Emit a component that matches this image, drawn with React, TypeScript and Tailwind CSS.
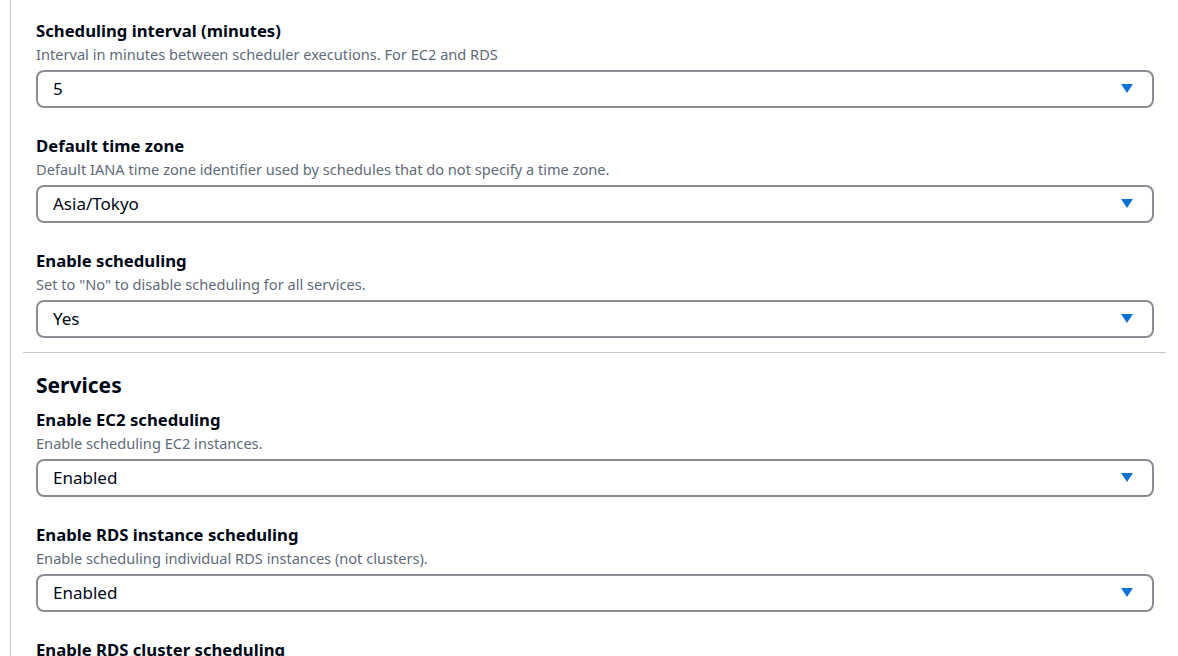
const fields1 = [
  { label: "Scheduling interval (minutes)", desc: "Interval in minutes between scheduler executions. For EC2 and RDS", value: "5" },
  { label: "Default time zone", desc: "Default IANA time zone identifier used by schedules that do not specify a time zone.", value: "Asia/Tokyo" },
  { label: "Enable scheduling", desc: 'Set to "No" to disable scheduling for all services.', value: "Yes" },
]

const fields2 = [
  { label: "Enable EC2 scheduling", desc: "Enable scheduling EC2 instances.", value: "Enabled" },
  { label: "Enable RDS instance scheduling", desc: "Enable scheduling individual RDS instances (not clusters).", value: "Enabled" },
  { label: "Enable RDS cluster scheduling", desc: "Enable scheduling RDS clusters (multi-AZ and Aurora).", value: "Enabled" },
]

function Field({ label, desc, value }: { label: string; desc: string; value: string }) {
  return (
    <div className="flex flex-col">
      <div className="text-[16.7px] leading-[22px] font-bold text-[#000716]">{label}</div>
      <div className="mt-[2px] text-[14.6px] leading-[20px] text-[#5f6b7a]">{desc}</div>
      <div className="mt-[6px] flex h-[38px] items-center justify-between rounded-lg border-2 border-[#8c8c94] bg-white pl-[15px] pr-[19px]">
        <span className="text-[17px] text-[#000716]">{value}</span>
        <svg width="12" height="10" viewBox="0 0 12 10">
          <path d="M0 0 H12 L6 9 Z" fill="#0972d3" />
        </svg>
      </div>
    </div>
  )
}

export default function App() {
  return (
    <div className="h-[656px] overflow-hidden bg-white pl-[10px] font-['Noto_Sans',sans-serif]">
      <div className="h-full w-[1157px] border-l border-[#c6c6cd]">
        <div className="flex flex-col gap-[27px] pl-[25px] pr-[13px] pt-[20px]">
          {fields1.map(f => (
            <Field key={f.label} {...f} />
          ))}
        </div>
        <div className="ml-[12px] mr-[1px] mt-[14px] border-t border-[#c6c6cd]" />
        <div className="pl-[25px] pr-[13px] pt-[18px]">
          <h2 className="mb-[10px] text-[21px] leading-[28px] font-bold text-[#000716]">Services</h2>
          <div className="flex flex-col gap-[27px]">
            {fields2.map(f => (
              <Field key={f.label} {...f} />
            ))}
          </div>
        </div>
      </div>
    </div>
  )
}
